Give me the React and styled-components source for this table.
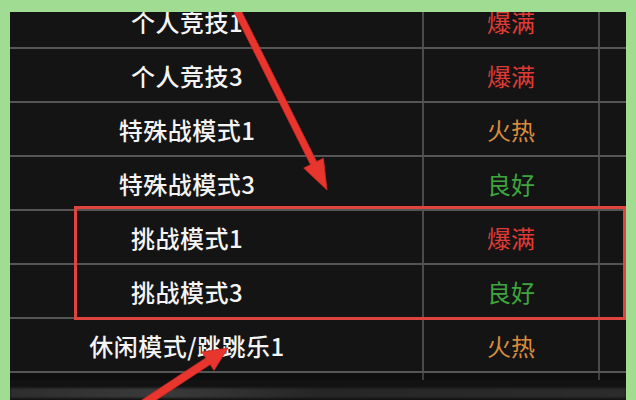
import styled, { createGlobalStyle } from "styled-components";

const rows = [
  { name: "个人竞技1", status: "爆满", tone: "red" },
  { name: "个人竞技3", status: "爆满", tone: "red" },
  { name: "特殊战模式1", status: "火热", tone: "orange" },
  { name: "特殊战模式3", status: "良好", tone: "green" },
  { name: "挑战模式1", status: "爆满", tone: "red", marked: true },
  { name: "挑战模式3", status: "良好", tone: "green", marked: true },
  { name: "休闲模式/跳跳乐1", status: "火热", tone: "orange" },
];

const tones = {
  red: "#e03a36",
  orange: "#d88b3e",
  green: "#3ea53e",
};

// polygon for a straight arrow, tail -> tip
const arrowPoints = (x1, y1, x2, y2, w, len, head) => {
  const dx = x2 - x1;
  const dy = y2 - y1;
  const l = Math.hypot(dx, dy);
  const ux = dx / l;
  const uy = dy / l;
  const nx = -uy;
  const ny = ux;
  const bx = x2 - ux * len;
  const by = y2 - uy * len;
  const pts = [
    [x1 + (nx * w) / 2, y1 + (ny * w) / 2],
    [bx + (nx * w) / 2, by + (ny * w) / 2],
    [bx + (nx * head) / 2, by + (ny * head) / 2],
    [x2, y2],
    [bx - (nx * head) / 2, by - (ny * head) / 2],
    [bx - (nx * w) / 2, by - (ny * w) / 2],
    [x1 - (nx * w) / 2, y1 - (ny * w) / 2],
  ];
  return pts.map((p) => p.map((v) => v.toFixed(1)).join(",")).join(" ");
};

const App = () => {
  const marked = rows.filter((r) => r.marked);
  const before = rows.slice(0, 4);
  const after = rows.slice(6);

  const renderRow = (r) => (
    <Row key={r.name}>
      <NameCell>{r.name}</NameCell>
      <StatusCell $tone={r.tone}>{r.status}</StatusCell>
      <EdgeCell />
    </Row>
  );

  return (
    <>
      <GlobalStyle />
      <Page>
        <Panel>
          <List>
            {before.map(renderRow)}
            <Marked>{marked.map(renderRow)}</Marked>
            {after.map(renderRow)}
          </List>
          <Footer>
            <FootCell />
            <FootCell />
            <FootCell $last />
          </Footer>
          <Scrollbar />
          <Arrows viewBox="0 0 616 388">
            <polygon points={arrowPoints(226, -4, 317, 178, 7, 30, 22)} />
            <polygon points={arrowPoints(130, 394, 218, 336, 8, 24, 22)} />
          </Arrows>
        </Panel>
      </Page>
    </>
  );
};

const GlobalStyle = createGlobalStyle`
  html, body {
    margin: 0;
    padding: 0;
    background: #a0dc92;
  }
  body {
    font-family: "Noto Sans CJK SC", "Noto Sans", sans-serif;
  }
`;

const Page = styled.div`
  width: 636px;
  height: 400px;
  box-sizing: border-box;
  padding: 12px 10px 0 10px;
  background: #a0dc92;
  overflow: hidden;
`;

const Panel = styled.div`
  position: relative;
  height: 388px;
  background: #121212;
  overflow: hidden;
`;

const List = styled.div`
  display: flex;
  flex-direction: column;
  margin-top: -17px;
`;

const Row = styled.div`
  display: grid;
  grid-template-columns: 414px 176px 1fr;
  height: 52px;
  border-bottom: 2px solid #555;
  background: #141414;
`;

const NameCell = styled.div`
  display: flex;
  align-items: center;
  justify-content: center;
  padding-right: 58px;
  border-right: 2px solid #4b4b4b;
  color: #f4f4f4;
  font-size: 24px;
  font-weight: 500;
  letter-spacing: 0.5px;
`;

const StatusCell = styled.div`
  display: flex;
  align-items: center;
  justify-content: center;
  border-right: 2px solid #4b4b4b;
  color: ${(p) => tones[p.$tone]};
  font-size: 24px;
`;

const EdgeCell = styled.div``;

const Marked = styled.div`
  position: relative;
  display: flex;
  flex-direction: column;

  &::after {
    content: "";
    position: absolute;
    left: 64px;
    right: 0;
    top: -5px;
    bottom: -1px;
    border: 3px solid #e0443e;
    pointer-events: none;
  }
`;

const Footer = styled.div`
  display: grid;
  grid-template-columns: 414px 176px 1fr;
  height: 7px;
  background: #0e0e0e;
`;

const FootCell = styled.div`
  border-right: ${(p) => (p.$last ? "none" : "2px solid #3e3e3e")};
`;

const Scrollbar = styled.div`
  height: 10px;
  margin-top: 8px;
  background: linear-gradient(
    to right,
    #2e2e2e 0%,
    #3a3a3a 25%,
    #262626 50%,
    #2c2c2c 100%
  );
  filter: blur(1px);
`;

const Arrows = styled.svg`
  position: absolute;
  left: 0;
  top: 0;
  width: 616px;
  height: 388px;
  pointer-events: none;

  polygon {
    fill: #e8362e;
    stroke: #c92a24;
    stroke-width: 0.8;
  }
`;

export default App;
